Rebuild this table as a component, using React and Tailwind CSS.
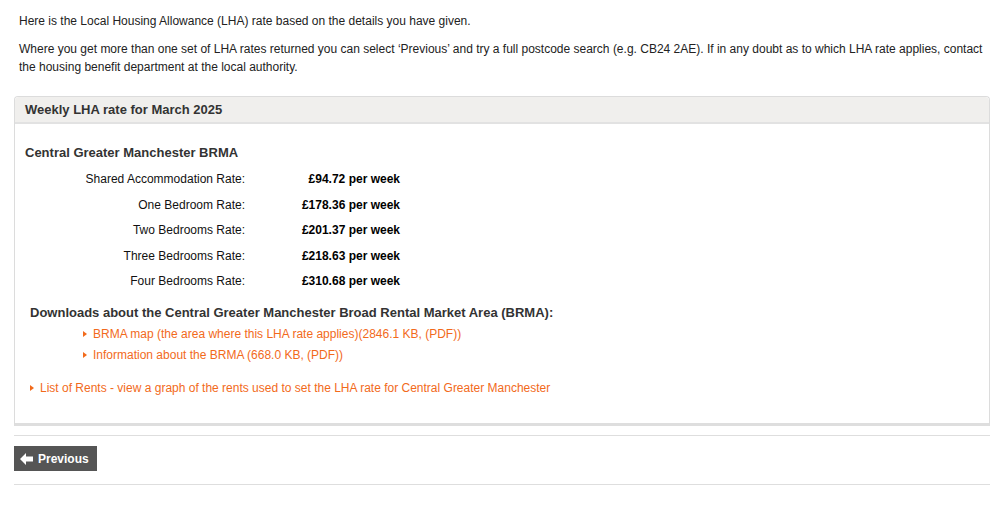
import React from 'react'

const rates = [
  ['Shared Accommodation Rate:', '£94.72 per week'],
  ['One Bedroom Rate:', '£178.36 per week'],
  ['Two Bedrooms Rate:', '£201.37 per week'],
  ['Three Bedrooms Rate:', '£218.63 per week'],
  ['Four Bedrooms Rate:', '£310.68 per week'],
]

const Arrow = () => (
  <span className="inline-block w-0 h-0 border-y-[3.5px] border-y-transparent border-l-[4px] border-l-[#f26a1b] mr-[6px] align-middle relative -top-[1px]" />
)

const App = () => {
  return (
    <div className="w-[996px] h-[505px] bg-white text-[12px] text-[#222] font-['Liberation_Sans',Arial,sans-serif]">
      <div className="pl-[14px] pr-[6px] pt-[12px]">
        <div className="px-[5px] leading-[18px]">
          <p>Here is the Local Housing Allowance (LHA) rate based on the details you have given.</p>
          <p className="mt-[10px]">
            Where you get more than one set of LHA rates returned you can select ‘Previous’ and try a full postcode search (e.g. CB24 2AE). If in any doubt as to which LHA rate applies, contact the housing benefit department at the local authority.
          </p>
        </div>

        <div className="mt-[20px] border border-[#dcdcdc] border-b-[3px] border-b-[#dedede] rounded-t-[4px]">
          <div className="bg-[#f0efed] border-b-2 border-b-[#e2e2e2] h-[27px] px-[10px] flex items-center text-[13px] font-bold text-[#333] rounded-t-[4px]">
            Weekly LHA rate for March 2025
          </div>
          <div className="px-[10px] pt-[20px] pb-[24px]">
            <h3 className="text-[13px] font-bold text-[#333] leading-[18px]">Central Greater Manchester BRMA</h3>
            <div className="mt-[5px] grid grid-cols-[220px_155px] leading-[25.5px]">
              {rates.map(([label, value]) => (
                <React.Fragment key={label}>
                  <div className="text-right text-[#111]">{label}</div>
                  <div className="text-right font-bold text-black">{value}</div>
                </React.Fragment>
              ))}
            </div>
            <h4 className="mt-[9px] ml-[5px] text-[13px] font-bold text-[#333] leading-[18px]">
              Downloads about the Central Greater Manchester Broad Rental Market Area (BRMA):
            </h4>
            <ul className="mt-[2.5px] ml-[58px] leading-[21px] text-[#f26a1b]">
              <li><Arrow />BRMA map (the area where this LHA rate applies)(2846.1 KB, (PDF))</li>
              <li><Arrow />Information about the BRMA (668.0 KB, (PDF))</li>
            </ul>
            <p className="mt-[12px] ml-[5px] leading-[21px] text-[#f26a1b]">
              <Arrow />List of Rents - view a graph of the rents used to set the LHA rate for Central Greater Manchester
            </p>
          </div>
        </div>

        <div className="mt-[9px] border-t border-[#dedede] pt-[10px] pb-[13px]">
          <button className="h-[25px] w-[83px] bg-[#555] text-white font-bold text-[12px] flex items-center pl-[6px] gap-[5px]">
            <svg width="13" height="12" viewBox="0 0 13 12" fill="white">
              <path d="M0 6 L6 0 L6 3.5 L13 3.5 L13 8.5 L6 8.5 L6 12 Z" />
            </svg>
            Previous
          </button>
        </div>
        <div className="border-t border-[#dedede]" />
      </div>
    </div>
  )
}

export default App
